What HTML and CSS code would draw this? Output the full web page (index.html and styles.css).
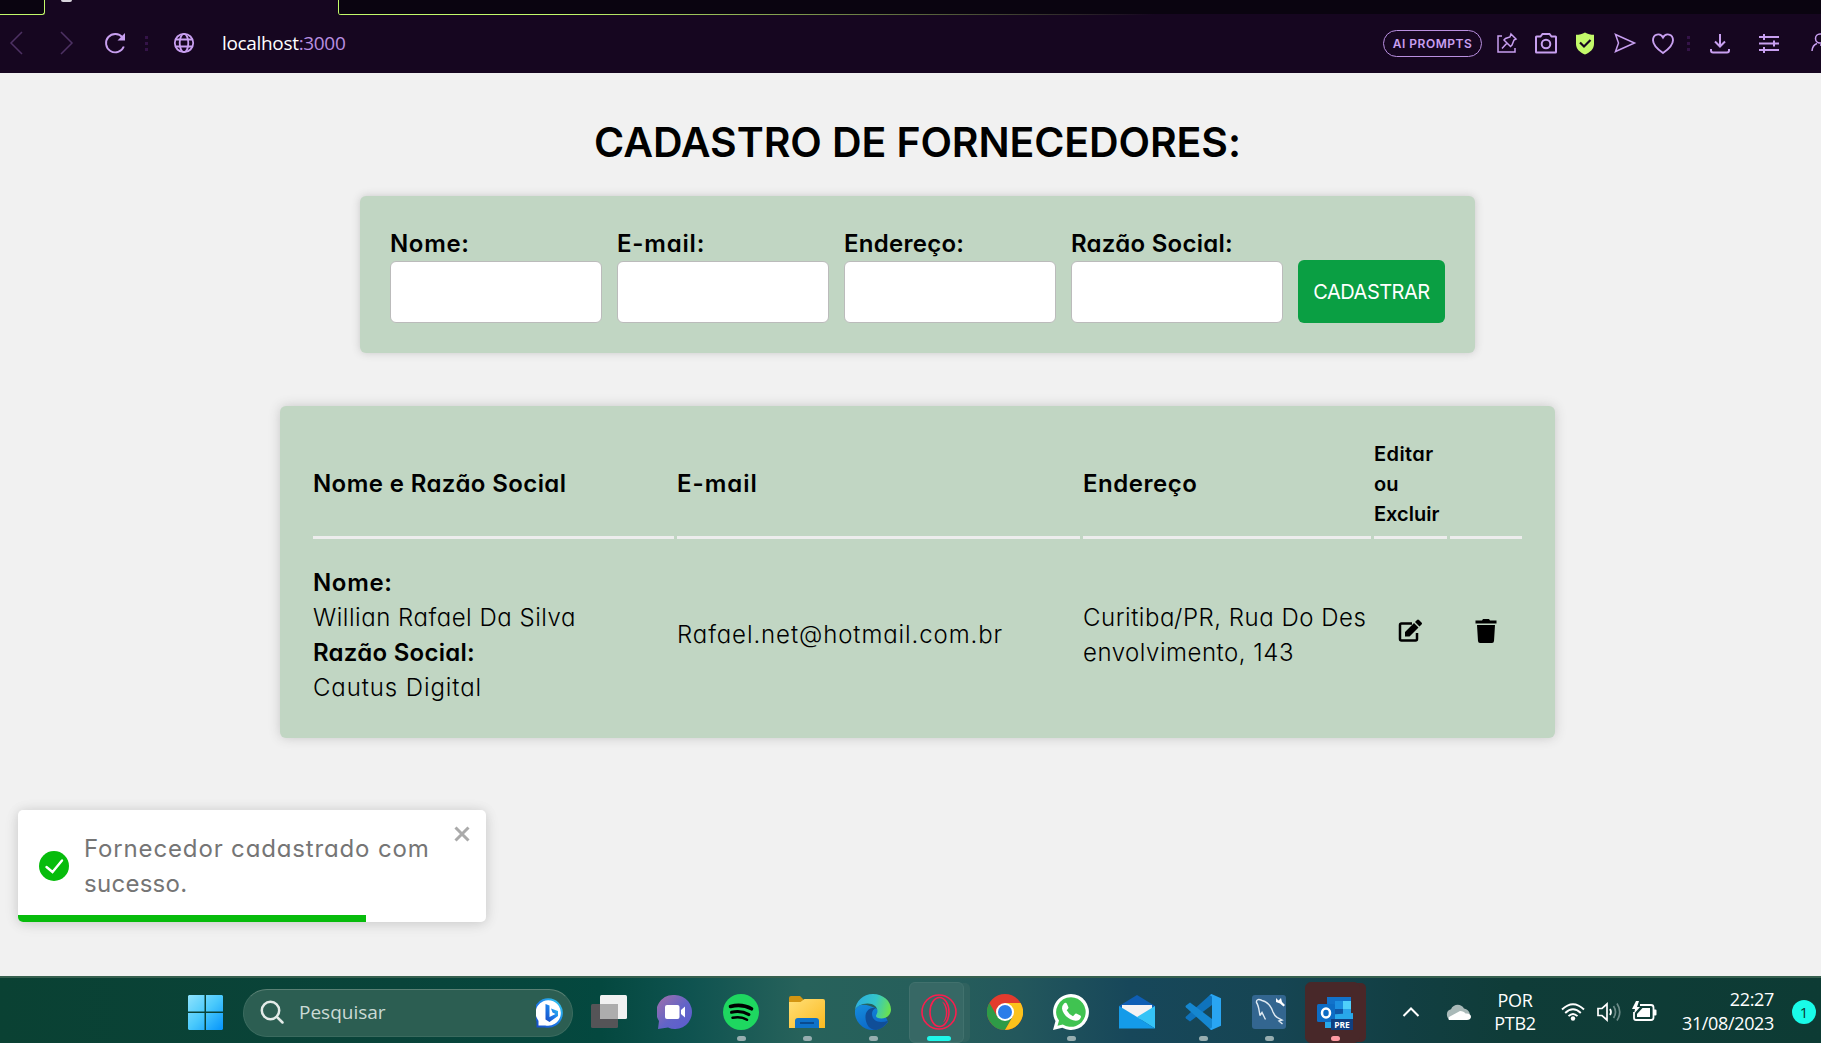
FILE: index.html
```html
<!DOCTYPE html>
<html lang="pt-BR">
<head>
<meta charset="utf-8">
<title>Cadastro de Fornecedores</title>
<link rel="stylesheet" href="styles.css">
</head>
<body>
<header class="browser">
  <div class="tabs">
    <div class="tab tab-left"></div>
    <div class="tab-active"><i class="tab-favicon"></i></div>
    <div class="tab tab-rest"></div>
  </div>
  <nav class="toolbar">
    <svg class="ic back dim" viewBox="0 0 24 24"><path d="M17 1 6 12l11 11"/></svg>
    <svg class="ic fwd dim" viewBox="0 0 24 24"><path d="M7 1l11 11L7 23"/></svg>
    <svg class="ic reload" viewBox="0 0 24 24"><path d="M19.500 6.500A9.200 9.200 0 1 0 20.800 15.500" stroke-width="1.900"/><path d="M22 2v7.500h-7.500z" fill="#c89ff0" stroke="none"/></svg>
    <i class="dots"></i>
    <svg class="ic globe" viewBox="0 0 24 24"><g stroke-width="1.800"><circle cx="12" cy="12" r="9.200"/><ellipse cx="12" cy="12" rx="4.300" ry="9.200"/><path d="M3.500 8.500h17M3.500 15.500h17"/></g></svg>
    <span class="url"><b class="host">localhost</b>:3000</span>
    <span class="pill">AI PROMPTS</span>
    <svg class="ic pin" viewBox="0 0 24 24"><g stroke-width="1.500"><path d="M7 5H3v16h17v-4"/><path d="M16 3l5 5-2 1-2 5-1.500 1.500-6.500-6.500 1.500-1.500 4.500-1.500zM12 12l-5 5.500"/></g></svg>
    <svg class="ic camera" viewBox="0 0 24 24"><path stroke-width="2" d="M2.500 5.500h4l2-2.500h7l2 2.500h4q.5 0 .5.500v15q0 .5-.5.500h-19q-.5 0-.5-.5V6q0-.5.5-.5z"/><circle cx="12" cy="13" r="4.300" stroke-width="2"/></svg>
    <svg class="ic shield" viewBox="0 0 24 24"><path d="M12 1.500c2.500 1.700 6 2.300 9 2.300V13c0 5-4 8.500-9 10.500C7 21.500 3 18 3 13V3.800c3 0 6.500-.6 9-2.300z" fill="#c3f96a" stroke="none"/><path d="M7 11.500l4 4 6.500-6.500" stroke="#160620" stroke-width="2.200"/></svg>
    <svg class="ic send" viewBox="0 0 24 24"><path d="M2.500 3.500 21.500 12l-19 8.500L5.500 12z"/></svg>
    <svg class="ic heart" viewBox="0 0 24 24"><path stroke-width="1.900" d="M12 22C7 18.500 2 14.500 2 9.200 2 3 9.300 1.300 12 6.500 14.700 1.300 22 3 22 9.200 22 14.500 17 18.500 12 22z"/></svg>
    <i class="dots dots2"></i>
    <svg class="ic download" viewBox="0 0 24 24"><path stroke-width="2" d="M12 3v12M7 10.500l5 5 5-5M3 18v1.500q0 2 2 2h14q2 0 2-2V18"/></svg>
    <svg class="ic sliders" viewBox="0 0 24 24"><path stroke-width="2" d="M2 6h20M2 12.500h20M2 19h20M7 3v6M17 9.500v6M7 16v6"/></svg>
    <svg class="ic person" viewBox="0 0 24 24"><circle cx="10" cy="7.500" r="4.500"/><path d="M2 20q.5-6 5-7.500M10 14h9"/></svg>
  </nav>
</header>

<main class="page">
  <h2 class="title">CADASTRO DE FORNECEDORES:</h2>
  <form class="form">
    <div class="field"><label class="sp-60">Nome:</label><input></div>
    <div class="field"><label class="sp-80">E-mail:</label><input></div>
    <div class="field"><label class="sp-25">Endereço:</label><input></div>
    <div class="field"><label class="sp-25">Razão Social:</label><input></div>
    <button class="submit" type="button">CADASTRAR</button>
  </form>
  <section class="card">
    <div class="row head">
      <div class="sp-40">Nome e Razão Social</div>
      <div class="sp-100">E-mail</div>
      <div class="sp-50">Endereço</div>
      <div class="small"><p><span class="sp-40">Editar</span><br>ou<br>Excluir</p></div>
      <div></div>
    </div>
    <div class="row data">
      <div><p><b class="sp-60">Nome:</b><br><span class="sp-50">Willian Rafael Da Silva</span><br><b class="sp-25">Razão Social:</b><br><span class="sp-90">Cautus Digital</span></p></div>
      <div class="mail sp-90">Rafael.net@hotmail.com.br</div>
      <div><p class="sp-50">Curitiba/PR, Rua Do Des<br>envolvimento, 143</p></div>
      <div class="act edit"><svg width="24" height="24" viewBox="0 0 24 24"><path d="M14 4.500H3.500Q2 4.500 2 6v14q0 1.500 1.500 1.500h14q1.500 0 1.500-1.500v-6" fill="none" stroke="#000" stroke-width="2.500"/><path d="M7 17.500V13l9-9 4.500 4.500-9 9zM17 3l2-2q1-1 2 0l2.500 2.500q1 1 0 2l-2 2z"/></svg></div>
      <div class="act"><svg width="24" height="24" viewBox="0 0 24 24"><path d="M1.500 1.500H8l1-1.500h6l1 1.500h6.500v3h-21zM3 6h18l-1 16q-.1 2-2 2H6q-1.900 0-2-2z"/></svg></div>
    </div>
  </section>
</main>

<aside class="toast">
  <div class="toast-body">
    <svg width="30" height="30" viewBox="0 0 30 30"><circle cx="15" cy="15" r="15" fill="#07bc0c"/><path d="M7.500 16l6 5L23 9.500" fill="none" stroke="#fff" stroke-width="2.400" stroke-linecap="round"/></svg>
    <p><span class="sp-85">Fornecedor cadastrado com</span><br><span class="sp-25">sucesso.</span></p>
    <svg class="close" width="16" height="16" viewBox="0 0 16 16"><path d="M1.500 1.500l13 13M14.500 1.500l-13 13" stroke="#aaa" stroke-width="3"/></svg>
  </div>
  <div class="progress"></div>
</aside>

<footer class="taskbar">
  <svg class="start" viewBox="0 0 35 35"><defs><linearGradient id="win" gradientUnits="userSpaceOnUse" x1="0" y1="0" x2="35" y2="35"><stop offset="0" stop-color="#8fe3fd"/><stop offset=".5" stop-color="#49c9fc"/><stop offset="1" stop-color="#0594fb"/></linearGradient></defs><path fill="url(#win)" d="M1 0h15.500v16.500H0V1zM18 0h16l1 1v15.500H18zM0 18h16.500v17H1l-1-1zM18 18h17v16l-1 1H18z"/></svg>
  <div class="search">
    <svg class="lens" width="24" height="24" viewBox="0 0 24 24" fill="none" stroke="#e3ebe8" stroke-width="2.500"><circle cx="10.500" cy="10.500" r="8.700"/><path d="M16.800 16.800l5.700 5.700" stroke-linecap="round"/></svg>
    <span class="search-text">Pesquisar</span>
    <svg class="bing" width="30" height="30" viewBox="0 0 30 30"><defs><linearGradient id="bg1" x1="0" y1="1" x2="1" y2="0"><stop offset="0" stop-color="#174ac4"/><stop offset=".5" stop-color="#1b7be8"/><stop offset="1" stop-color="#35d3f2"/></linearGradient></defs><path d="M15 1.500A13.500 13.500 0 1 1 9 28.500H1.500V23A13.500 13.500 0 0 1 15 1.500z" fill="#fff" stroke="url(#bg1)" stroke-width="2"/><path d="M9.500 6l4 1.500V19l6-3-3-1.500-1.500-4 7 2.500v5L13.500 24l-4-2.500z" fill="url(#bg1)"/></svg>
  </div>
  <div class="apps">
    <div class="app"><svg viewBox="0 0 36 36"><rect y="10" width="27" height="24" rx="1.500" fill="#555457"/><rect x="9" y="1" width="27" height="24" rx="1.500" fill="#f1f1f1"/><path d="M9 10h18v15H10.500Q9 25 9 23.500z" fill="#adadad"/></svg></div>
    <div class="app"><svg viewBox="0 0 36 36"><defs><linearGradient id="ch" x1="0" x2="1" y1="0" y2="1"><stop stop-color="#a470a8"/><stop offset=".55" stop-color="#6264c7"/><stop offset="1" stop-color="#5b5bd0"/></linearGradient></defs><path d="M18 1a17 17 0 1 1-7 32.500L1 35l1-8A17 17 0 0 1 18 1z" fill="url(#ch)"/><rect x="8" y="11" width="14.500" height="14" rx="2" fill="#fff"/><path d="M24 16l4-3.500V23.500L24 20z" fill="#fff"/></svg></div>
    <div class="app run"><svg viewBox="0 0 36 36"><circle cx="18" cy="18" r="18" fill="#1ed760"/><g fill="none" stroke="#000" stroke-linecap="round"><path d="M7.500 12.500q11.500-3 21 2.300" stroke-width="3.600"/><path d="M8.500 18.300q9.500-2.300 17.500 2.300" stroke-width="3"/><path d="M9.500 23.800q8-2 14.500 2" stroke-width="2.500"/></g></svg></div>
    <div class="app run"><svg viewBox="0 0 36 36"><defs><linearGradient id="fo" x1="0" x2="1" y1="0" y2="1"><stop stop-color="#ffdf77"/><stop offset="1" stop-color="#fcba20"/></linearGradient></defs><path d="M0 4q0-2 2-2h9l4 4v5H0z" fill="#d39511"/><path d="M0 8h11.500L15.500 5H34q2 0 2 2v27H0z" fill="url(#fo)"/><path d="M6 34V27q0-3 3-3h18q3 0 3 3v7z" fill="#0f72c8"/><path d="M11 29h14" stroke="#0a4b8f" stroke-width="2"/></svg></div>
    <div class="app run"><svg viewBox="0 0 36 36"><defs><linearGradient id="e1" x1="0" y1=".3" x2="1" y2=".5"><stop stop-color="#2baee0"/><stop offset=".55" stop-color="#34c5c9"/><stop offset="1" stop-color="#6be24e"/></linearGradient><linearGradient id="e2" x1="0" y1="0" x2=".5" y2="1"><stop stop-color="#168ddd"/><stop offset="1" stop-color="#0b68c8"/></linearGradient></defs><path d="M0 16a18 18 0 0 0 18 20q9 0 15-8-4-12-18-16Q4 8 0 16z" fill="url(#e2)"/><path d="M33.500 26.500q-3.500 1.500-7.500 1.500c-6 0-9-4-9-8 0-3 1.500-5 4-6-7-1-11 4-10.500 10C11 31 15 36 21 36q8-1.500 12.500-9.500z" fill="#104e98"/><path d="M0 16C1 7 8 0 18 0c10 0 18 7 18 15.500 0 5-4 9-9.500 9-3.500 0-5.500-1-5.500-2.500s1.500-2 1.500-5c0-4-4-7.500-10-7.500C6 9.500 1.500 12.500 0 16z" fill="url(#e1)"/></svg></div>
    <div class="app open"><svg viewBox="0 0 36 36" fill="none" stroke="#fa1e4e" stroke-width="1.600"><circle cx="18" cy="18" r="17"/><ellipse cx="18.500" cy="18" rx="9.500" ry="14.500"/><path d="M21 7.500c7 2.500 7 18 1 21 4-6 4-15-1-21z" fill="#fa1e4e" stroke="none"/></svg></div>
    <div class="app"><svg viewBox="0 0 36 36"><circle cx="18" cy="18" r="18" fill="#e33b2e"/><path d="M2.400 9A18 18 0 0 0 18 36l7.800-13.500-15.600 0z" fill="#2e9b47"/><path d="M33.600 9A18 18 0 0 1 18 36l7.800-13.500L18 9z" fill="#fcc21b"/><circle cx="18" cy="18" r="9" fill="#fff"/><circle cx="18" cy="18" r="7" fill="#2b7de9"/></svg></div>
    <div class="app run"><svg viewBox="0 0 36 36"><path d="M18 0a18 18 0 1 1-8.700 33.800L0 36l2.500-9A18 18 0 0 1 18 0z" fill="#fff"/><path d="M18 3.200a14.800 14.800 0 1 1-8.200 27.200L4.500 31.700 6 26.600A14.800 14.800 0 0 1 18 3.200z" fill="#40c351"/><path d="M11 9.500q2-1.500 3 .5l1.500 3.500q0 1-1.800 2.800 2.300 4.200 6.300 6l2.300-2.500q.7-.5 1.500 0l3.500 1.700q1 .5.500 2-1.300 3.300-5 3.300C16 26.500 9.500 20 9 14.500q0-3 2-5z" fill="#fff"/></svg></div>
    <div class="app"><svg viewBox="0 0 36 36"><path d="M0 12 18 1l18 11v4H0z" fill="#0f5eb5"/><path d="M3 11h30v12L18 26 3 21z" fill="#f4f2f3"/><path d="M0 12l18 11L36 12v22.500z" fill="#35c3f6"/><path d="M0 12v22.500h36L18 23z" fill="#149be9"/></svg></div>
    <div class="app run"><svg viewBox="0 0 36 36"><path d="M27 0v11L5 27.500 1 24.500q-1-1 0-2L25.500.5z" fill="#0f73bd"/><path d="M27 36V25L5 8.500 1 11.500q-1 1 0 2L25.500 35.500z" fill="#1587d0"/><path d="M26.500 0 36 4.200v27.600L26.500 36q-1-.5-2-1.500 2.500.5 2.500-2V3.500q0-2.500-2.500-2z" fill="#29a5f2"/></svg></div>
    <div class="app run"><svg viewBox="0 0 36 36"><rect x="1" y="1" width="34" height="34" rx="3" fill="#336690"/><g fill="none" stroke="#dfeaf2" stroke-width="1.400"><path d="M9 21.500C8 17 8 12 5.500 8.500 5 5 8 5 11 6.500 17 8 20 12 22 18q1.500 4 5 6l4 2-3 1 3.500 3M9 21.500l2-3 2 4q1 2 1.500 3"/></g><path d="M25 4l2.500 2.500L30 4l1 4 3 3-1.500 1.500L29 9.500l-4-1.500z" fill="#fff"/></svg></div>
    <div class="app alert"><svg viewBox="0 0 36 36"><path d="M10 3h24v18H10z" fill="#1272ca"/><path d="M18 7h8v8h-8z" fill="#1c8ee0"/><path d="M26 7h8v8h-8z" fill="#50d0fa"/><path d="M18 15h8v8h-8z" fill="#0f57a6"/><path d="M26 15h8v8h-8z" fill="#2aa4ea"/><path d="M8 21l28-2v11L25 34H8z" fill="#28a8ea"/><rect y="10" width="18" height="18" rx="1.500" fill="#0d6cc4"/><ellipse cx="9" cy="19" rx="4" ry="4.500" fill="none" stroke="#fff" stroke-width="2.500"/><rect x="14" y="25" width="22" height="11" fill="#103f80"/><text x="25" y="33.500" font-family="Open Sans, sans-serif" font-size="8.500" font-weight="700" fill="#fff" text-anchor="middle">PRE</text></svg></div>
  </div>
  <svg class="chev" width="18" height="12" viewBox="0 0 18 12"><path d="M1.500 10 9 2.500l7.500 7.500" fill="none" stroke="#fff" stroke-width="2"/></svg>
  <svg class="cloud" width="26" height="18" viewBox="0 0 26 18"><path d="M6 17a5.500 5.500 0 0 1-1-10.800C7 1 15 0 18 5.500q5 1 6 6z" fill="#a9b9b8"/><path d="M3 17Q2 16 3 14l11-6q4 0 5.500 2.500Q25 10 25 14q-.5 3-4 3z" fill="#fff"/></svg>
  <div class="lang"><span>POR</span><span>PTB2</span></div>
  <svg class="wifi" width="24" height="18" viewBox="0 0 24 18"><g fill="none" stroke="#fff" stroke-width="1.900"><path d="M1 6.500q11-10.500 22 0M4.200 10q7.800-7.500 15.600 0M7.500 13.200q4.500-4.500 9 0"/></g><circle cx="12" cy="15.500" r="2.200" fill="#fff"/></svg>
  <svg class="vol" width="24" height="20" viewBox="0 0 24 20"><g fill="none" stroke="#fff" stroke-width="1.700"><path d="M1 6.500h4L10 2v16l-5-4.500H1z"/><path d="M13 7q2 3 0 6"/><path d="M16.500 4q4 6 0 12M20 1.500q5.500 8.500 0 17" stroke="#6c8a87"/></g></svg>
  <svg class="batt" width="26" height="21" viewBox="0 0 26 21"><path d="M8 4h11q2.500 0 2.500 2.500v10q0 2.500-2.500 2.500H4q-2 0-2-2v-6" fill="none" stroke="#fff" stroke-width="1.800"/><path d="M22 8.500h1.500q1 0 1 1v4q0 1-1 1H22zM10.500 7H18v9H5v-3z" fill="#fff"/><path d="M4 0L0 8h3l-1 5 6-7H5l2-6z" fill="#fff"/></svg>
  <div class="clock"><span>22:27</span><span>31/08/2023</span></div>
  <div class="badge">1</div>
</footer>
</body>
</html>
```
FILE: styles.css
```css
* { box-sizing: border-box; }
body {
  margin: 0;
  height: 1043px;
  display: flex;
  flex-direction: column;
  overflow: hidden;
  background: #f1f1f1;
  color: #000;
  font-family: Inter, sans-serif;
  font-feature-settings: "cv11";
}
p { margin: 0; }
svg { flex: none; display: block; }

/* tracking steps */
.sp-25 { letter-spacing: .27px; }
.sp-40 { letter-spacing: .4px; }
.sp-50 { letter-spacing: .52px; }
.sp-60 { letter-spacing: .65px; }
.sp-80 { letter-spacing: .8px; }
.sp-85 { letter-spacing: .85px; }
.sp-90 { letter-spacing: .9px; }
.sp-100 { letter-spacing: 1px; }

/* browser chrome */
.browser { height: 73px; background: #160620; flex: none; }
.tabs { display: flex; height: 15px; }
.tab { background: #0a0410; border-bottom: 1px solid #c3f96a; }
.tab-left { width: 45px; border-right: 1px solid #c3f96a; border-bottom-right-radius: 3px; }
.tab-active { width: 293px; padding-left: 16px; }
.tab-favicon { display: block; width: 11px; height: 2px; background: #d8d4dc; border-radius: 0 0 5px 5px; }
.tab-rest {
  flex: 1;
  border-left: 1px solid #c3f96a;
  border-bottom: 0;
  border-bottom-left-radius: 3px;
  background: linear-gradient(90deg, #c3f96a, #c3f96a 15%, #160620 55%) 0 100% / 100% 1px no-repeat, #0a0410;
}
.toolbar { display: flex; align-items: center; height: 58px; padding-bottom: 2px; }
.ic { width: 24px; height: 24px; fill: none; stroke: #c89ff0; stroke-width: 1.5; }
.dim { stroke: #4d3163; }
.back { margin-left: 5px; }
.fwd { margin-left: 25px; }
.reload { margin-left: 25px; }
.dots {
  flex: none;
  width: 3px;
  height: 15px;
  margin-left: 18px;
  background: repeating-linear-gradient(#341348 0 3px, transparent 3px 6px);
}
.globe { margin-left: 24px; }
.url {
  flex: none;
  margin-left: 26px;
  width: 1161px;
  color: #b98fe0;
  font-family: "Open Sans", sans-serif;
  font-size: 19px;
  letter-spacing: -.33px;
}
.host { color: #fff; font-weight: 400; }
.pill {
  width: 99px;
  height: 27px;
  flex: none;
  border: 1.5px solid #b98fe0;
  border-radius: 14px;
  color: #c89ff0;
  display: flex;
  align-items: center;
  justify-content: center;
  font-size: 12px;
  font-weight: 600;
  letter-spacing: .5px;
}
.pin { margin-left: 13px; }
.camera, .shield { margin-left: 15px; }
.send { margin-left: 16px; }
.heart { margin-left: 14px; }
.dots2 { margin-left: 12px; }
.download { margin-left: 18px; }
.sliders { margin-left: 25px; }
.person { margin-left: 29px; }

/* page */
.page { flex: 1; display: flex; flex-direction: column; align-items: center; padding-left: 14px; }
.title {
  margin: 38px 0 0;
  height: 85px;
  line-height: 63px;
  font-size: 41px;
  font-weight: 600;
  letter-spacing: -.1px;
  white-space: nowrap;
}
.form {
  width: 1115px;
  height: 157px;
  padding: 0 30px 30px;
  display: flex;
  align-items: flex-end;
  gap: 15px;
  background: #c1d6c3;
  border-radius: 6px;
  box-shadow: 0 0 8px #c8c8c8;
}
.field { width: 212px; display: flex; flex-direction: column; white-space: nowrap; }
.field label { height: 35px; line-height: 35px; font-size: 24px; font-weight: 600; }
.field input { height: 62px; width: 212px; border: 1px solid #bbb; border-radius: 6px; background: #fff; }
.submit {
  width: 147px;
  height: 63px;
  padding: 0;
  border: 0;
  border-radius: 6px;
  background: #0a9f43;
  color: #fff;
  font: 400 20px Inter, sans-serif;
  letter-spacing: -.5px;
}
.card {
  width: 1275px;
  height: 332px;
  margin-top: 53px;
  padding: 30px 33px 0;
  background: #c1d6c3;
  border-radius: 6px;
  box-shadow: 0 0 12px #c8c8c8;
}
.row {
  display: grid;
  grid-template-columns: 361px 403px 288px 73px 72px;
  column-gap: 3px;
  font-size: 24px;
  line-height: 35px;
  white-space: nowrap;
}
.row > div { display: flex; align-items: center; }
.head { height: 103px; font-weight: 600; }
.head > div { border-bottom: 3px solid #ededed; padding-bottom: 6px; }
.head .small { font-size: 20px; line-height: 30px; padding-bottom: 4px; }
.data { height: 192px; font-weight: 300; }
.data b { font-weight: 600; }
.data .mail { padding-bottom: 2px; }
.act { justify-content: center; padding-bottom: 8px; }
.edit { padding-right: 2px; }

/* toast */
.toast {
  position: absolute;
  left: 18px;
  top: 810px;
  width: 468px;
  height: 112px;
  display: flex;
  flex-direction: column;
  overflow: hidden;
  border-radius: 5px;
  background: #fff;
  box-shadow: 0 1px 12px rgba(0, 0, 0, .13), 0 2px 18px rgba(0, 0, 0, .06);
  color: #757575;
  font-size: 24px;
  line-height: 35px;
  white-space: nowrap;
}
.toast-body { display: flex; flex: 1; align-items: center; padding: 7px 16px 0 21px; }
.toast-body p { flex: 1; margin-left: 15px; }
.close { align-self: flex-start; margin-top: 9px; }
.progress { width: 348px; height: 7px; background: #07bc0c; }

/* taskbar */
.taskbar {
  height: 67px;
  flex: none;
  display: flex;
  align-items: center;
  border-top: 2px solid #36604f;
  color: #fff;
  font-family: "Open Sans", sans-serif;
  background: linear-gradient(90deg, #0a4133 0, #09443a 22%, #04483f 33%, #0f5350 38%, #27625b 44%, #265e5b 52%, #23575c 56%, #17475a 62%, #164553 70%, #123f43 77%, #0f3c38 83%, #0d3b34 100%);
}
.start { width: 35px; height: 35px; margin-left: 188px; margin-top: 4px; }
.search {
  width: 330px;
  height: 48px;
  margin: 4px 0 0 20px;
  padding: 0 6px 0 16px;
  display: flex;
  align-items: center;
  border: 1px solid #3b6b5f;
  border-top-color: #5a8074;
  border-radius: 24px;
  background: #2c5e52;
  color: #cbdad5;
  font-size: 19px;
}
.search-text { margin-left: 15px; padding-bottom: 2px; }
.lens { margin-bottom: 2px; }
.bing { margin-left: auto; }
.apps { display: flex; margin-left: 3px; height: 65px; }
.app { width: 66px; display: flex; flex-direction: column; align-items: center; padding-top: 16px; position: relative; }
.app svg { width: 36px; height: 36px; z-index: 1; }
.run::after { content: ""; width: 9px; height: 5px; margin-top: 6px; border-radius: 3px; background: #97aeb0; }
.open::before, .alert::before {
  content: "";
  position: absolute;
  left: 3px;
  top: 4px;
  width: 53px;
  height: 59px;
  border-radius: 6px;
  background: #376865;
  border: 1px solid #41716d;
  box-shadow: 7px 0 0 -1px #30625f;
}
.open::after { content: ""; width: 24px; height: 5px; margin-top: 6px; border-radius: 3px; background: #1ff7ea; z-index: 1; }
.alert::before { background: #482829; border-color: #482829; box-shadow: 7px 0 0 -1px #4a2728; }
.alert::after { content: ""; width: 9px; height: 5px; margin-top: 6px; border-radius: 3px; background: #fd9aa2; z-index: 1; }
.chev { margin: 2px 0 0 34px; }
.cloud { margin: 2px 0 0 26px; }
.lang { width: 60px; margin: 3px 0 0 13px; display: flex; flex-direction: column; align-items: center; font-size: 18px; line-height: 23px; letter-spacing: -.3px; }
.wifi { margin: 2px 0 0 16px; }
.vol { margin: 2px 0 0 12px; }
.batt { margin: 1px 0 0 11px; }
.clock {
  width: 110px;
  margin: 1px 0 0 6px;
  display: flex;
  flex-direction: column;
  align-items: flex-end;
  font-size: 18px;
  line-height: 24px;
  letter-spacing: -.35px;
  white-space: nowrap;
}
.badge {
  width: 24px;
  height: 24px;
  margin: 3px 0 0 18px;
  border-radius: 50%;
  background: #19fbe8;
  color: #0b3530;
  font-size: 15px;
  line-height: 24px;
  text-align: center;
}
```
